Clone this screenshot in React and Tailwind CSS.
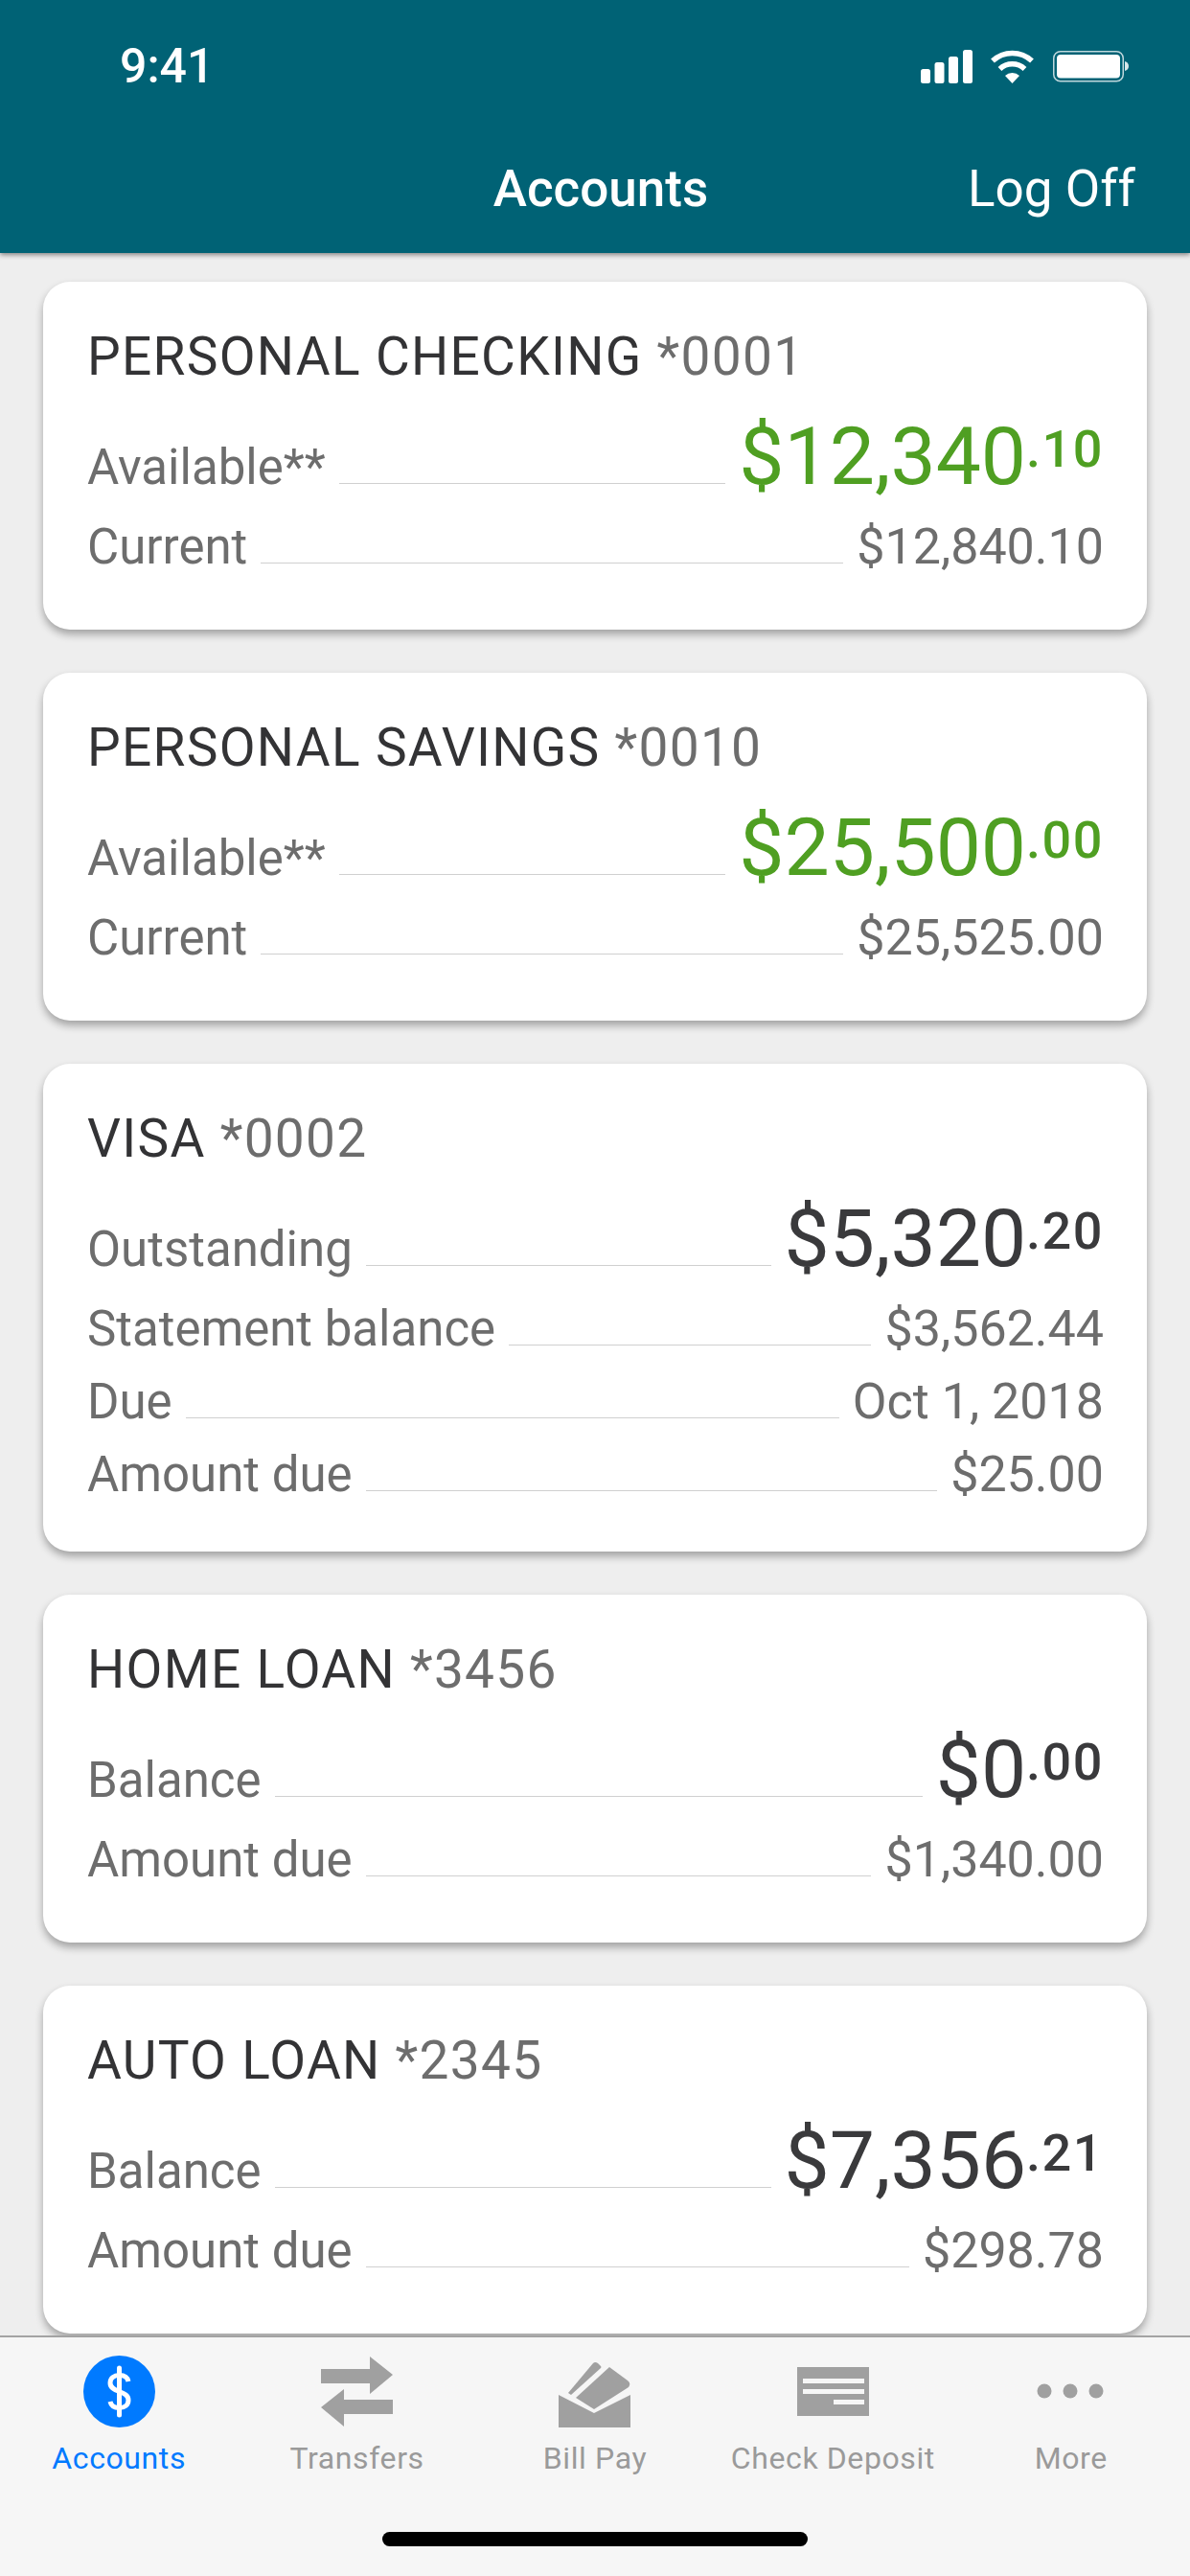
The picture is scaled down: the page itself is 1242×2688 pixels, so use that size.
import React from "react";

const accounts = [
  {
    name: "PERSONAL CHECKING",
    number: "*0001",
    label: "Available**",
    whole: "$12,340",
    cents: "10",
    green: true,
    rows: [["Current", "$12,840.10"]],
  },
  {
    name: "PERSONAL SAVINGS",
    number: "*0010",
    label: "Available**",
    whole: "$25,500",
    cents: "00",
    green: true,
    rows: [["Current", "$25,525.00"]],
  },
  {
    name: "VISA",
    number: "*0002",
    label: "Outstanding",
    whole: "$5,320",
    cents: "20",
    tight: true,
    rows: [
      ["Statement balance", "$3,562.44"],
      ["Due", "Oct 1, 2018"],
      ["Amount due", "$25.00"],
    ],
  },
  {
    name: "HOME LOAN",
    number: "*3456",
    label: "Balance",
    whole: "$0",
    cents: "00",
    rows: [["Amount due", "$1,340.00"]],
  },
  {
    name: "AUTO LOAN",
    number: "*2345",
    label: "Balance",
    whole: "$7,356",
    cents: "21",
    rows: [["Amount due", "$298.78"]],
  },
];

const StatusIcons = () => (
  <div className="flex items-center mt-[1px]">
    <svg width="54" height="35" viewBox="0 0 54 35" fill="#fff">
      <rect x="0" y="20" width="10" height="15" rx="2.5" />
      <rect x="14.5" y="13" width="10" height="22" rx="2.5" />
      <rect x="29" y="7" width="10" height="28" rx="2.5" />
      <rect x="44" y="0" width="10" height="35" rx="2.5" />
    </svg>
    <svg className="ml-[19px]" width="45" height="35" viewBox="0 0 45 35" fill="none">
      <path d="M2 11.5 A 30 30 0 0 1 43 11.5" stroke="#fff" strokeWidth="5.5" />
      <path d="M9.5 20 A 19 19 0 0 1 35.5 20" stroke="#fff" strokeWidth="5.5" />
      <path d="M15 27 A 11 11 0 0 1 30 27 L22.5 35 Z" fill="#fff" />
    </svg>
    <svg className="ml-[20px]" width="79" height="33" viewBox="0 0 79 33" fill="none">
      <rect x="0.75" y="0.75" width="72.5" height="31" rx="7" stroke="#fff" strokeOpacity="0.75" strokeWidth="1.5" />
      <rect x="4" y="4" width="66" height="24.5" rx="4" fill="#fff" />
      <path d="M75 11 C77.5 11.5 79 13.5 79 16 C79 18.5 77.5 20.5 75 21 Z" fill="#fff" fillOpacity="0.85" />
    </svg>
  </div>
);

const AccountCard = ({ account }) => {
  const amountColor = account.green ? "text-[#4f9f22]" : "text-[#3a3a3c]";
  return (
    <div className={`bg-white rounded-[28px] shadow-[0_5px_9px_rgba(0,0,0,0.32)] pl-[46px] pr-[45px] pt-[48px] ${account.tight ? "pb-[42px]" : "pb-[48px]"}`}>
      <div className="text-[55px] leading-[60px] text-[#333335] tracking-[1.3px] whitespace-nowrap">
        {account.name} <span className="text-[#6d6d6d]">{account.number}</span>
      </div>
      <div className="flex items-baseline mt-[33px] h-[84px] leading-[84px]">
        <span className="text-[51px] text-[#6d6d6d]">{account.label}</span>
        <div className="flex-1 h-0 border-b-[1px] border-[#d0d0d0] mx-[14px]" />
        <span className={`text-[84px] whitespace-nowrap ${amountColor}`}>
          {account.whole}
          <span className="text-[54px] font-medium tracking-[1.5px] align-[18px] leading-[0]">.{account.cents}</span>
        </span>
      </div>
      <div className="mt-[14px]">
        {account.rows.map(([label, value]) => (
          <div key={label} className="flex items-baseline h-[76px] leading-[76px] text-[#6d6d6d] whitespace-nowrap">
            <span className="text-[51px]">{label}</span>
            <div className="flex-1 h-0 border-b-[1px] border-[#d0d0d0] mx-[14px]" />
            <span className="text-[52px]">{value}</span>
          </div>
        ))}
      </div>
    </div>
  );
};

const Tab = ({ label, active, children }) => (
  <div className="flex flex-col items-center">
    {children}
    <span className={`mt-[14px] text-[32px] leading-[36px] tracking-[0.6px] whitespace-nowrap ${active ? "text-[#007aff]" : "text-[#9a9a9a]"}`}>
      {label}
    </span>
  </div>
);

export default function App() {
  return (
    <div className="w-[1242px] h-[2688px] flex flex-col overflow-hidden bg-[#eeeeee] font-['Roboto',sans-serif]">
      <header className="relative z-10 h-[264px] shrink-0 bg-[#006275] shadow-[0_2px_5px_rgba(0,0,0,0.45)] text-white">
        <div className="flex items-center justify-between pl-[125px] pr-[64px] pt-[40px] h-[98px]">
          <span className="text-[50px] leading-[58px] font-medium">9:41</span>
          <StatusIcons />
        </div>
        <div className="grid grid-cols-[1fr_auto_1fr] items-center mt-[69px]">
          <div />
          <span className="ml-[12px] text-[53px] leading-[60px] font-medium">Accounts</span>
          <span className="justify-self-end pr-[57px] text-[53px] leading-[60px]">Log Off</span>
        </div>
      </header>

      <main className="flex-1 flex flex-col gap-[45px] px-[45px] pt-[30px] min-h-0">
        {accounts.map((account) => (
          <AccountCard key={account.name} account={account} />
        ))}
      </main>

      <nav className="relative z-10 h-[251px] shrink-0 bg-[#f6f6f6] border-t-2 border-[#a3a3a3] pt-[19px]">
        <div className="grid grid-cols-5">
          <Tab label="Accounts" active>
            <svg width="75" height="75" viewBox="0 0 75 75">
              <circle cx="37.5" cy="37.5" r="37.5" fill="#007aff" />
              <path d="M47 27 C46 22 42 20.5 37.5 20.5 C32 20.5 28 23.5 28 28.5 C28 33.5 32 35.5 37.5 37.5 C43 39.5 47 41.5 47 46.5 C47 51.5 43 54.5 37.5 54.5 C32.5 54.5 29 52.5 28 48" fill="none" stroke="#fff" strokeWidth="5" />
              <path d="M37.5 13 V62" stroke="#fff" strokeWidth="5" strokeLinecap="round" />
            </svg>
          </Tab>
          <Tab label="Transfers">
            <svg width="75" height="75" viewBox="0 0 75 75" fill="#a0a0a0">
              <path d="M0 14 H51 V1 L75 20 L51 40 V29 H0 Z" />
              <path d="M75 46 H24 V35 L0 54 L24 74 V61 H75 Z" />
            </svg>
          </Tab>
          <Tab label="Bill Pay">
            <svg width="75" height="75" viewBox="0 0 75 75" fill="#a0a0a0">
              <path d="M0 41 L37 60 L75 41 V75 H0 Z" />
              <path d="M53 12 L72 26 Q76 29 73 33 L37 56 L18 44 Z" />
              <path d="M36 8 Q38 6 41 8 L44 11 Q45 12 44 13 L13 41 L10 39 Z" />
            </svg>
          </Tab>
          <Tab label="Check Deposit">
            <svg width="75" height="75" viewBox="0 0 75 75">
              <rect x="0" y="12" width="75" height="51" fill="#a0a0a0" />
              <rect x="6" y="24" width="64" height="5" fill="#f6f6f6" />
              <rect x="6" y="35" width="64" height="5" fill="#f6f6f6" />
              <rect x="38" y="46" width="32" height="5" fill="#f6f6f6" />
            </svg>
          </Tab>
          <Tab label="More">
            <svg width="75" height="75" viewBox="0 0 75 75" fill="#a0a0a0">
              <circle cx="10" cy="37" r="7.5" />
              <circle cx="37" cy="37" r="7.5" />
              <circle cx="64" cy="37" r="7.5" />
            </svg>
          </Tab>
        </div>
        <div className="mt-[59px] mx-auto w-[444px] h-[15px] rounded-full bg-black" />
      </nav>
    </div>
  );
}
